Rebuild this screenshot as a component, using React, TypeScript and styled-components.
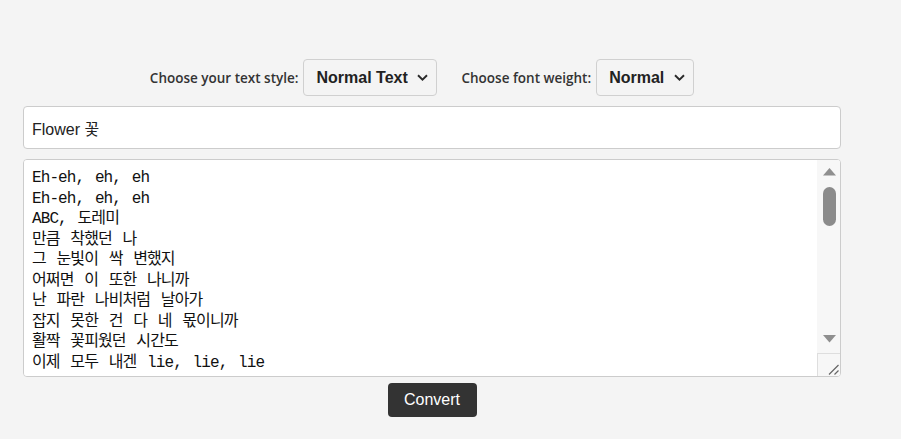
import React from "react";
import styled, { createGlobalStyle } from "styled-components";

const Global = createGlobalStyle`
  html, body { margin: 0; padding: 0; background: #f4f4f4; }
  body { font-family: "Liberation Sans", Arial, sans-serif; }
  * { box-sizing: border-box; }
`;

const Page = styled.div`
  width: 818px;
  margin: 59px 0 0 23px;
`;

const Controls = styled.div`
  display: flex;
  justify-content: center;
  align-items: center;
  gap: 4px;
  margin-bottom: 10px;
`;

const Group = styled.div`
  display: flex;
  align-items: center;
  gap: 5px;
  margin-right: 20px;
`;

const Label = styled.label`
  font-family: "Open Sans", "Noto Sans", sans-serif;
  font-weight: 600;
  font-size: 13.5px;
  color: #333;
`;

const SelectWrap = styled.div`
  position: relative;
  display: flex;
`;

const Select = styled.select<{ $w: number }>`
  appearance: none;
  -webkit-appearance: none;
  width: ${(p) => p.$w}px;
  height: 37px;
  padding: 0 28px 0 12px;
  background: #f4f4f4;
  border: 1px solid #d0d0d0;
  border-radius: 4px;
  font-family: "Liberation Sans", Arial, sans-serif;
  font-weight: 700;
  font-size: 16px;
  color: #222;
  outline: none;
`;

const Chevron = styled.svg`
  position: absolute;
  right: 9px;
  top: 15px;
  pointer-events: none;
`;

const TextInput = styled.input`
  display: block;
  width: 100%;
  height: 43px;
  padding: 0 8px;
  margin-bottom: 10px;
  background: #fff;
  border: 1px solid #ccc;
  border-radius: 4px;
  font-family: "Liberation Sans", Arial, "Noto Sans CJK KR", sans-serif;
  font-size: 16px;
  color: #222;
  outline: none;
`;

const AreaWrap = styled.div`
  position: relative;
  width: 100%;
  height: 218px;
`;

const TextArea = styled.textarea`
  display: block;
  width: 100%;
  height: 100%;
  padding: 8px 31px 8px 8px;
  background: #fff;
  border: 1px solid #ccc;
  border-radius: 4px;
  font-family: "Liberation Mono", "Noto Sans CJK KR", monospace;
  font-size: 16px;
  letter-spacing: -0.9px;
  word-spacing: 2px;
  line-height: 20.5px;
  color: #111;
  resize: none;
  outline: none;
  overflow-y: auto;
  scrollbar-width: none;
`;

const ScrollBar = styled.div`
  position: absolute;
  top: 1px;
  right: 1px;
  bottom: 1px;
  width: 23px;
  display: flex;
  flex-direction: column;
  background: #f7f7f7;
  border-top-right-radius: 3px;
  border-bottom-right-radius: 3px;
  pointer-events: none;
`;

const ArrowButton = styled.div<{ $pad: number }>`
  height: 27px;
  display: flex;
  justify-content: center;
  align-items: flex-start;
  padding-top: ${(p) => p.$pad}px;
  padding-left: 1px;
`;

const Track = styled.div`
  flex: 1;
  display: flex;
  flex-direction: column;
  align-items: center;
  padding-left: 1px;
`;

const Thumb = styled.div`
  width: 13px;
  height: 39px;
  border-radius: 7px;
  background: #8b8b8b;
`;

const Resizer = styled.div`
  height: 23px;
  border-top: 1px solid #dedede;
  border-left: 1px solid #dedede;
  display: flex;
  justify-content: flex-end;
  align-items: flex-end;
`;

const Button = styled.button`
  display: block;
  margin: 6px auto 0;
  height: 34px;
  width: 89px;
  padding: 0;
  background: #333;
  color: #fff;
  border: none;
  border-radius: 4px;
  font-family: "Liberation Sans", Arial, sans-serif;
  font-size: 16px;
`;

const visible = [
  "Eh-eh, eh, eh",
  "Eh-eh, eh, eh",
  "ABC, 도레미",
  "만큼 착했던 나",
  "그 눈빛이 싹 변했지",
  "어쩌면 이 또한 나니까",
  "난 파란 나비처럼 날아가",
  "잡지 못한 건 다 네 몫이니까",
  "활짝 꽃피웠던 시간도",
  "이제 모두 내겐 lie, lie, lie",
];

const lyrics = [...visible, "", ...visible, "", ...visible, "", ...visible].join("\n");

const ChevronIcon = () => (
  <Chevron width="11" height="7" viewBox="0 0 11 7">
    <path d="M1 1.2 L5.5 5.6 L10 1.2" fill="none" stroke="#2a2a2a" strokeWidth="1.9" />
  </Chevron>
);

export default function App() {
  return (
    <>
      <Global />
      <Page>
        <Controls>
          <Group>
            <Label>Choose your text style:</Label>
            <SelectWrap>
              <Select $w={134} defaultValue="normal">
                <option value="normal">Normal Text</option>
                <option value="bold">Bold Text</option>
                <option value="italic">Italic Text</option>
              </Select>
              <ChevronIcon />
            </SelectWrap>
          </Group>
          <Group>
            <Label>Choose font weight:</Label>
            <SelectWrap>
              <Select $w={98} defaultValue="normal">
                <option value="normal">Normal</option>
                <option value="bold">Bold</option>
                <option value="light">Light</option>
              </Select>
              <ChevronIcon />
            </SelectWrap>
          </Group>
        </Controls>
        <TextInput defaultValue="Flower 꽃" />
        <AreaWrap>
          <TextArea defaultValue={lyrics} />
          <ScrollBar aria-hidden="true">
            <ArrowButton $pad={8}>
              <svg width="13" height="8" viewBox="0 0 13 8">
                <path d="M6.5 0 L13 7.5 L0 7.5 Z" fill="#8f8f8f" />
              </svg>
            </ArrowButton>
            <Track>
              <Thumb />
            </Track>
            <ArrowButton $pad={9}>
              <svg width="13" height="8" viewBox="0 0 13 8">
                <path d="M0 0 L13 0 L6.5 7.5 Z" fill="#8f8f8f" />
              </svg>
            </ArrowButton>
            <Resizer>
              <svg width="14" height="14" viewBox="0 0 14 14">
                <path d="M3 12.5 L12.5 3 M8.5 12.5 L12.5 8.5" stroke="#666" strokeWidth="1.2" />
              </svg>
            </Resizer>
          </ScrollBar>
        </AreaWrap>
        <Button>Convert</Button>
      </Page>
    </>
  );
}
